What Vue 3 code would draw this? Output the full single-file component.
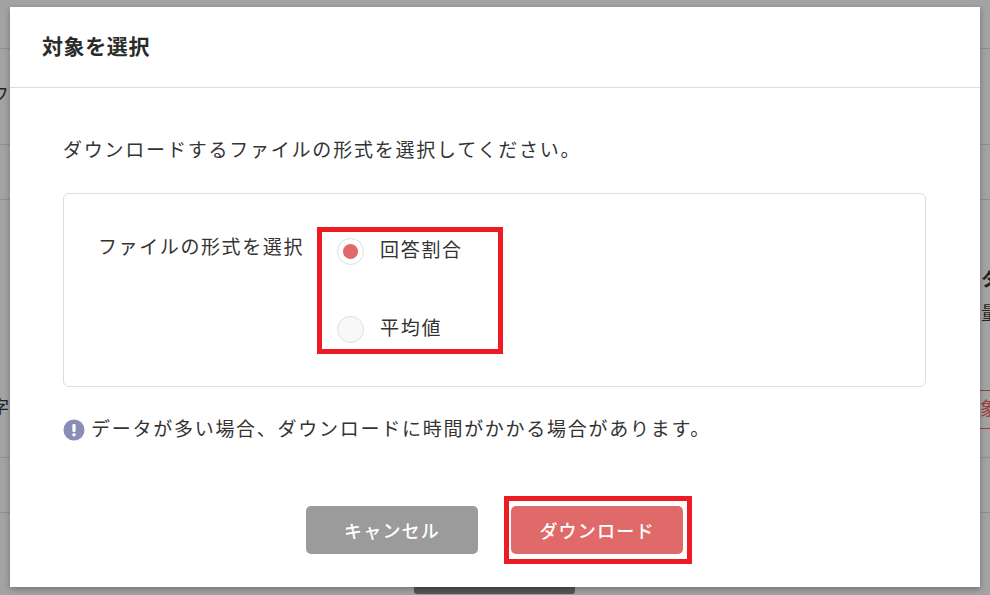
<script setup>
const options = [
  { label: '回答割合', checked: true },
  { label: '平均値', checked: false },
]
</script>

<template>
  <div class="page">
    <div class="backdrop">
      <span class="bg-line" style="top: 48px"></span>
      <span class="bg-line" style="top: 144px"></span>
      <span class="bg-line" style="top: 199px"></span>
      <span class="bg-line" style="top: 457px"></span>
      <span class="bg-line" style="top: 512px"></span>
      <span class="bg-text" style="left: -9px; top: 84px">フ</span>
      <span class="bg-text" style="left: -9px; top: 397px">字</span>
      <span class="bg-text bold" style="left: 981px; top: 269px">タ</span>
      <span class="bg-text" style="left: 981px; top: 303px">量</span>
      <span class="bg-red" style="left: 980px"><span>象</span></span>
      <span class="bg-tab"></span>
    </div>

    <div class="modal">
      <header class="modal-head">
        <h2>対象を選択</h2>
      </header>
      <div class="modal-body">
        <p class="lead">ダウンロードするファイルの形式を選択してください。</p>
        <div class="box">
          <div class="box-label">ファイルの形式を選択</div>
          <div class="radios">
            <label class="radio" v-for="opt in options" :key="opt.label">
              <span class="dot" :class="{ checked: opt.checked }"></span>
              <span>{{ opt.label }}</span>
            </label>
          </div>
        </div>
        <p class="note">
          <svg class="note-icon" width="22" height="22" viewBox="0 0 22 22">
            <circle cx="11" cy="11" r="10.5" fill="#8a8db5" />
            <rect x="9.4" y="5" width="3.2" height="8" rx="1.2" fill="#fff" />
            <circle cx="11" cy="15.8" r="1.7" fill="#fff" />
          </svg>
          データが多い場合、ダウンロードに時間がかかる場合があります。
        </p>
        <div class="actions">
          <button class="btn cancel">キャンセル</button>
          <button class="btn download">ダウンロード</button>
        </div>
      </div>
    </div>

    <div class="mark mark-radios"></div>
    <div class="mark mark-btn"></div>
  </div>
</template>

<style>
html, body {
  margin: 0;
  overflow: hidden;
}
</style>

<style scoped>
.page {
  position: relative;
  width: 990px;
  height: 595px;
  overflow: hidden;
  background: #a3a3a3;
  padding: 7px 10px 8px;
  box-sizing: border-box;
  font-family: Roboto, "Noto Sans CJK JP", sans-serif;
  color: #333;
}
.backdrop {
  position: absolute;
  inset: 0;
}
.bg-line {
  position: absolute;
  left: 0;
  right: 0;
  height: 1px;
  background: #8f8f8f;
}
.bg-text {
  position: absolute;
  font-size: 18px;
  line-height: 22px;
  color: #222;
}
.bg-text.bold {
  font-weight: 700;
}
.bg-red {
  position: absolute;
  top: 390px;
  width: 20px;
  height: 37px;
  border-top: 1px solid #a33c3c;
  border-bottom: 1px solid #a33c3c;
  color: #a33c3c;
  font-size: 18px;
  line-height: 36px;
  overflow: hidden;
}
.bg-tab {
  position: absolute;
  left: 414px;
  top: 580px;
  width: 161px;
  height: 14px;
  border-radius: 3px;
  background: #555;
}
.modal {
  position: relative;
  width: 970px;
  height: 580px;
  background: #fff;
  box-shadow: 0 2px 6px rgba(0, 0, 0, 0.3);
  display: flex;
  flex-direction: column;
}
.modal-head {
  height: 81px;
  box-sizing: border-box;
  border-bottom: 1px solid #ddd;
  padding: 0 32px 5px;
  display: flex;
  align-items: center;
  flex: none;
}
.modal-head h2 {
  margin: 0;
  font-size: 21px;
  font-weight: 700;
  letter-spacing: 0.6px;
  color: #2b2b2b;
}
.modal-body {
  padding: 0 54px 0 53px;
  flex: 1;
  display: flex;
  flex-direction: column;
}
.lead {
  margin: 49px 0 0;
  font-size: 19px;
  line-height: 28px;
  letter-spacing: 1.78px;
}
.box {
  margin-top: 28px;
  height: 194px;
  box-sizing: border-box;
  border: 1px solid #ddd;
  border-radius: 6px;
  display: flex;
  padding: 40px 0 0 34px;
}
.box-label {
  font-size: 19px;
  line-height: 28px;
  letter-spacing: 1.6px;
  width: 239px;
  flex: none;
}
.radios {
  display: flex;
  flex-direction: column;
  gap: 50px;
  padding-top: 3px;
}
.radio {
  display: flex;
  align-items: center;
  gap: 16px;
  font-size: 19px;
  line-height: 28px;
  letter-spacing: 1.7px;
}
.dot {
  width: 27px;
  height: 27px;
  box-sizing: border-box;
  border: 1px solid #ddd;
  border-radius: 50%;
  background: #f8f8f8;
  position: relative;
}
.dot.checked {
  background: #fff;
}
.dot.checked::after {
  content: "";
  position: absolute;
  inset: 5px;
  border-radius: 50%;
  background: #e06a6a;
}
.note {
  margin: 29px 0 0;
  display: flex;
  align-items: center;
  gap: 6px;
  font-size: 19px;
  line-height: 28px;
  letter-spacing: 1.73px;
}
.note-icon {
  flex: none;
}
.actions {
  margin-top: 62px;
  display: flex;
  justify-content: center;
  gap: 33px;
}
.btn {
  width: 172px;
  height: 48px;
  border: 0;
  border-radius: 5px;
  color: #fff;
  font-family: inherit;
  font-size: 18px;
  font-weight: 500;
  letter-spacing: 1.2px;
}
.cancel {
  background: #9b9b9b;
}
.download {
  background: #e06a6a;
}
.mark {
  position: absolute;
  border: 5px solid #ed1c24;
  box-sizing: border-box;
}
.mark-radios {
  left: 317px;
  top: 227px;
  width: 186px;
  height: 127px;
}
.mark-btn {
  left: 504px;
  top: 496px;
  width: 188px;
  height: 68px;
}
</style>
